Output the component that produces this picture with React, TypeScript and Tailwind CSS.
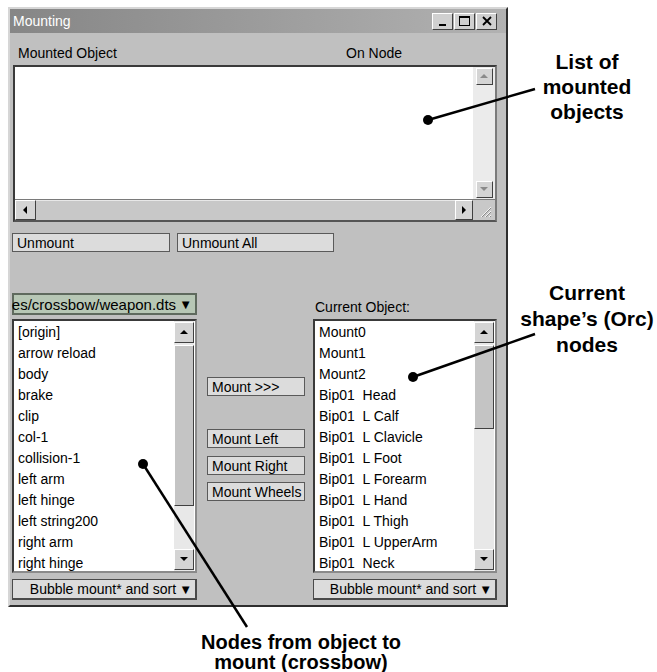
import * as React from "react";

/* ---------- tokens ---------- */
const RAISED =
  "border border-t-white border-l-white border-r-[#404040] border-b-[#404040]";
const FLAT_BTN =
  "h-[19px] flex items-center pl-[4px] text-[14px] leading-none bg-[#dcdcdc] border border-[#5a5a5a] whitespace-nowrap";

function cn(...classes: Array<string | false | null | undefined>) {
  return classes.filter(Boolean).join(" ");
}

/* ---------- bits ---------- */
function Tri({ dir, dim }: { dir: "up" | "down" | "left" | "right"; dim?: boolean }) {
  const pts = {
    up: "1,6 5,2 9,6",
    down: "1,2 5,6 9,2",
    left: "6,1 2,5 6,9",
    right: "3,1 7,5 3,9",
  }[dir];
  return (
    <svg width="10" height="10" viewBox="0 0 10 10">
      <polygon points={pts} fill={dim ? "#8a8a8a" : "#000"} />
    </svg>
  );
}

function ArrowBox({
  dir,
  dim,
  className,
}: {
  dir: "up" | "down" | "left" | "right";
  dim?: boolean;
  className?: string;
}) {
  return (
    <div className={cn(RAISED, "bg-[#d4d4d4] grid place-items-center shrink-0", className)}>
      <Tri dir={dir} dim={dim} />
    </div>
  );
}

function TitleBtn({ children }: { children: React.ReactNode }) {
  return (
    <div className={cn(RAISED, "w-[21px] h-[17px] bg-[#d0d0d0] grid place-items-center")}>
      {children}
    </div>
  );
}

function NodeList({ items, thumb }: { items: string[]; thumb: string }) {
  return (
    <div className="h-[254px] flex bg-white border-2 border-[#3a3a3a] border-r-[#8a8a8a] border-b-[#8a8a8a] overflow-hidden">
      <div className="flex-1 pl-[4px] pt-[1px] text-[14px] leading-[21px] whitespace-pre">
        {items.map((it) => (
          <div key={it} className="h-[21px]">
            {it}
          </div>
        ))}
      </div>
      <div className="w-[20px] mr-[1px] py-[1px] flex flex-col bg-[#e8e8e8]">
        <ArrowBox dir="up" className="h-[21px]" />
        <div className={cn(RAISED, "mt-[2px] bg-[#c4c4c4]", thumb)} />
        <div className="flex-1" />
        <ArrowBox dir="down" className="h-[21px]" />
      </div>
    </div>
  );
}

function Dropdown({ text, green }: { text: string; green?: boolean }) {
  return (
    <div
      className={cn(
        "flex items-center justify-end whitespace-nowrap leading-none pr-[3px]",
        green
          ? "h-[22px] text-[15px] bg-[#b7c7b5] border-2 border-[#5f6a5e]"
          : "h-[21px] text-[14px] bg-[#dcdcdc] border border-[#4a4a4a] border-b-2 border-r-2"
      )}
    >
      <span className="shrink-0">{text}</span>
      <span className="shrink-0 ml-[3px] text-[13px]">▼</span>
    </div>
  );
}

const LEFT_ITEMS = [
  "[origin]",
  "arrow reload",
  "body",
  "brake",
  "clip",
  "col-1",
  "collision-1",
  "left arm",
  "left hinge",
  "left string200",
  "right arm",
  "right hinge",
];

const RIGHT_ITEMS = [
  "Mount0",
  "Mount1",
  "Mount2",
  "Bip01  Head",
  "Bip01  L Calf",
  "Bip01  L Clavicle",
  "Bip01  L Foot",
  "Bip01  L Forearm",
  "Bip01  L Hand",
  "Bip01  L Thigh",
  "Bip01  L UpperArm",
  "Bip01  Neck",
];

export default function App() {
  return (
    <div className="relative w-[657px] h-[672px] bg-white overflow-hidden text-black font-['Liberation_Sans',Arial,sans-serif]">
      <div className="pl-[8px] pt-[7px]">
        {/* WINDOW */}
        <div className="w-[500px] h-[600px] flex flex-col bg-[#c0c0c0] border-2 border-t-[#d6d6d6] border-l-[#d6d6d6] border-r-[#2e2e2e] border-b-[#2e2e2e]">
          {/* title bar */}
          <div className="h-[24px] shrink-0 flex items-center justify-between pl-[3px] pr-[9px] bg-linear-to-r from-[#868686] to-[#b2b2b2]">
            <span className="text-white text-[14px]">Mounting</span>
            <div className="flex gap-[1px]">
              <TitleBtn>
                <div className="w-[7px] h-[2px] bg-black mt-[8px]" />
              </TitleBtn>
              <TitleBtn>
                <div className="w-[11px] h-[10px] border border-black border-t-2" />
              </TitleBtn>
              <TitleBtn>
                <svg width="10" height="10" viewBox="0 0 10 10">
                  <path d="M1 1 L9 9 M9 1 L1 9" stroke="#000" strokeWidth="1.8" />
                </svg>
              </TitleBtn>
            </div>
          </div>

          {/* header labels */}
          <div className="mt-[12px] h-[16px] flex text-[14px] leading-[16px]">
            <span className="w-[336px] pl-[8px]">Mounted Object</span>
            <span>On Node</span>
          </div>

          {/* mounted list */}
          <div className="mt-[4px] ml-[3px] w-[484px] h-[157px] flex flex-col border-2 border-[#3a3a3a] border-r-[#7a7a7a] border-b-[#555]">
            <div className="flex-1 flex bg-white">
              <div className="flex-1" />
              <div className="w-[22px] flex flex-col items-center py-[1px] bg-[#ebebeb]">
                <ArrowBox dir="up" dim className="w-[17px] h-[17px]" />
                <div className="flex-1" />
                <ArrowBox dir="down" dim className="w-[17px] h-[17px]" />
              </div>
            </div>
            <div className="h-[21px] flex bg-[#c0c0c0] border-t border-[#7a7a7a]">
              <ArrowBox dir="left" className="w-[21px]" />
              <div className="flex-1 bg-[#c8c8c8] border-t border-[#e8e8e8]" />
              <ArrowBox dir="right" className="w-[18px]" />
              <div className="w-[22px] grid place-items-center bg-[#c8c8c8]">
                <svg width="16" height="16" viewBox="0 0 16 16">
                  <path d="M15 5 L5 15 M15 9 L9 15 M15 13 L13 15" stroke="#f4f4f4" strokeWidth="1" />
                  <path d="M15 6 L6 15 M15 10 L10 15 M15 14 L14 15" stroke="#8a8a8a" strokeWidth="1" />
                </svg>
              </div>
            </div>
          </div>

          {/* unmount buttons */}
          <div className="mt-[11px] ml-[2px] flex gap-[7px]">
            <div className={cn(FLAT_BTN, "w-[158px]")}>Unmount</div>
            <div className={cn(FLAT_BTN, "w-[157px]")}>Unmount All</div>
          </div>

          {/* dropdown + label row */}
          <div className="mt-[41px] ml-[2px] flex items-end">
            <div className="w-[185px]">
              <Dropdown text="es/crossbow/weapon.dts" green />
            </div>
            <div className="w-[116px]" />
            <span className="text-[14px] leading-[16px] pl-[2px]">Current Object:</span>
          </div>

          {/* lists */}
          <div className="mt-[4px] ml-[2px] flex">
            <div className="w-[185px]">
              <NodeList items={LEFT_ITEMS} thumb="h-[161px]" />
            </div>
            <div className="w-[98px] ml-[10px] flex flex-col">
              <div className={cn(FLAT_BTN, "mt-[58px]")}>Mount &gt;&gt;&gt;</div>
              <div className={cn(FLAT_BTN, "mt-[33px]")}>Mount Left</div>
              <div className={cn(FLAT_BTN, "mt-[8px]")}>Mount Right</div>
              <div className={cn(FLAT_BTN, "mt-[7px]")}>Mount Wheels</div>
            </div>
            <div className="w-[184px] ml-[8px]">
              <NodeList items={RIGHT_ITEMS} thumb="h-[84px]" />
            </div>
          </div>

          {/* bottom dropdowns */}
          <div className="mt-[6px] ml-[2px] flex">
            <div className="w-[185px]">
              <Dropdown text="Bubble mount* and sort" />
            </div>
            <div className="w-[116px]" />
            <div className="w-[184px]">
              <Dropdown text="Bubble mount* and sort" />
            </div>
          </div>
        </div>
      </div>

      {/* CALLOUTS */}
      <svg className="absolute inset-0 pointer-events-none" width="657" height="672">
        <line x1="428" y1="120" x2="535" y2="89" stroke="#000" strokeWidth="2.5" />
        <circle cx="428" cy="120" r="5" fill="#000" />
        <line x1="413" y1="377" x2="535" y2="334" stroke="#000" strokeWidth="2.5" />
        <circle cx="413" cy="377" r="5" fill="#000" />
        <line x1="143" y1="464" x2="247" y2="627" stroke="#000" strokeWidth="2.5" />
        <circle cx="143" cy="464" r="5" fill="#000" />
      </svg>

      <div className="absolute left-[507px] top-[49px] w-[160px] text-center font-bold text-[21px] leading-[25px]">
        List of
        <br />
        mounted
        <br />
        objects
      </div>
      <div className="absolute left-[507px] top-[280px] w-[160px] text-center font-bold text-[21px] leading-[26px]">
        Current
        <br />
        shape’s (Orc)
        <br />
        nodes
      </div>
      <div className="absolute left-[201px] top-[632px] w-[200px] text-center font-bold text-[20px] leading-[20px] whitespace-nowrap">
        Nodes from object to
        <br />
        mount (crossbow)
      </div>
    </div>
  );
}
